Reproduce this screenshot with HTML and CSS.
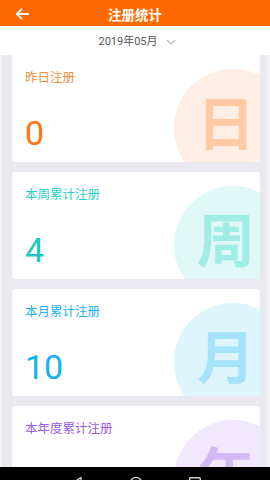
FILE: index.html
```html
<!DOCTYPE html>
<html lang="zh">
<head>
<meta charset="utf-8">
<title>注册统计</title>
<link rel="stylesheet" href="styles.css">
</head>
<body>
<div class="app">
  <header class="topbar">
    <svg class="back" width="14" height="12" viewBox="0 0 14 12"><path d="M13 6H2M6.5 1.3L1.8 6l4.7 4.7" fill="none" stroke="#fff" stroke-width="1.8" stroke-linecap="round" stroke-linejoin="round"/></svg>
    <h1 class="title">注册统计</h1>
  </header>
  <div class="month">
    <span class="month-text">2019年05月</span>
    <svg class="chev" width="10" height="6" viewBox="0 0 10 6"><path d="M1 1l4 4 4-4" fill="none" stroke="#b5b5b5" stroke-width="1.1"/></svg>
  </div>
  <main class="list">
    <section class="card c-day">
      <div class="bubble"></div>
      <div class="glyph">日</div>
      <div class="label">昨日注册</div>
      <div class="num">0</div>
    </section>
    <section class="card c-week">
      <div class="bubble"></div>
      <div class="glyph">周</div>
      <div class="label">本周累计注册</div>
      <div class="num">4</div>
    </section>
    <section class="card c-month">
      <div class="bubble"></div>
      <div class="glyph">月</div>
      <div class="label">本月累计注册</div>
      <div class="num">10</div>
    </section>
    <section class="card c-year">
      <div class="bubble"></div>
      <div class="glyph">年</div>
      <div class="label">本年度累计注册</div>
      <div class="num">0</div>
    </section>
  </main>
  <nav class="sysnav">
    <svg class="nav-ico" width="14" height="14" viewBox="0 0 14 14"><path d="M11 1.5L2.5 7 11 12.5z" fill="none" stroke="#cfcfcf" stroke-width="1.4" stroke-linejoin="round"/></svg>
    <svg class="nav-ico" width="14" height="14" viewBox="0 0 14 14"><circle cx="7" cy="7" r="5.6" fill="none" stroke="#cfcfcf" stroke-width="1.4"/></svg>
    <svg class="nav-ico" width="14" height="14" viewBox="0 0 14 14"><rect x="1.7" y="1.7" width="10.6" height="10.6" rx="1" fill="none" stroke="#cfcfcf" stroke-width="1.4"/></svg>
  </nav>
</div>
</body>
</html>
```
FILE: styles.css
```css
* { box-sizing: border-box; margin: 0; padding: 0; }
html, body { width: 270px; height: 480px; overflow: hidden; }
body {
  font-family: "Noto Sans CJK SC", "Noto Sans", Roboto, sans-serif;
  background: #fff;
}
.app {
  width: 270px;
  height: 480px;
  display: flex;
  flex-direction: column;
  overflow: hidden;
}
.topbar {
  height: 26px;
  flex: none;
  background: #ff6a00;
  display: flex;
  align-items: center;
  justify-content: center;
  position: relative;
}
.back { position: absolute; left: 15px; top: 8px; }
.title {
  font-size: 13.5px;
  font-weight: 700;
  color: #fff;
  line-height: 1;
  margin-top: 3px;
}
.month {
  height: 29px;
  flex: none;
  background: #fff;
  display: flex;
  align-items: center;
  justify-content: center;
  gap: 8px;
  padding-left: 4px;
  padding-top: 2px;
}
.month-text {
  font-family: Roboto, "Noto Sans CJK SC", sans-serif;
  font-size: 11px;
  color: #555;
  line-height: 1;
}
.chev { margin-top: 1px; }
.list {
  flex: 1;
  min-height: 0;
  overflow: hidden;
  background: #e9e9ef;
  border-left: 2px solid #f3f3f6;
  border-right: 3px solid #f3f3f6;
  padding: 0 7px 0 10px;
  display: flex;
  flex-direction: column;
  gap: 10px;
}
.card {
  flex: none;
  height: 107px;
  background: #fff;
  border-radius: 3px;
  position: relative;
  overflow: hidden;
  display: flex;
  flex-direction: column;
  justify-content: space-between;
  padding: 15px 13px 12px;
}
.card:first-child { border-radius: 0 0 3px 3px; }
.bubble {
  position: absolute;
  left: 162px;
  top: 14px;
  width: 118px;
  height: 118px;
  border-radius: 50%;
}
.glyph {
  position: absolute;
  left: 185px;
  top: 36px;
  font-size: 58px;
  font-weight: 700;
  line-height: 1;
}
.label {
  position: relative;
  font-size: 12.5px;
  line-height: 14px;
}
.num {
  position: relative;
  font-family: Roboto, sans-serif;
  font-size: 34px;
  line-height: 34px;
}
.c-day .label { color: #f58b3c; }
.c-day .num { color: #ff7410; }
.c-day .bubble { background: #ffeee3; }
.c-day .glyph { color: #ffcba5; }
.c-week .label { color: #2ccfc9; }
.c-week .num { color: #1cc8c3; }
.c-week .bubble { background: #e0f8f6; }
.c-week .glyph { color: #a0ede6; }
.c-month .label { color: #1eb4ee; }
.c-month .num { color: #12b3f0; }
.c-month .bubble { background: #dff5fd; }
.c-month .glyph { color: #a4e3fa; }
.c-year .label { color: #9a5ce0; }
.c-year .num { color: #8a4fd8; }
.c-year .bubble { background: #f1e8fd; }
.c-year .glyph { color: #d2b9f4; }
.sysnav {
  height: 13px;
  flex: none;
  background: #000;
  display: flex;
  justify-content: center;
  gap: 45px;
  overflow: hidden;
  padding-top: 9px;
  padding-left: 2px;
}
.nav-ico { flex: none; }
```
